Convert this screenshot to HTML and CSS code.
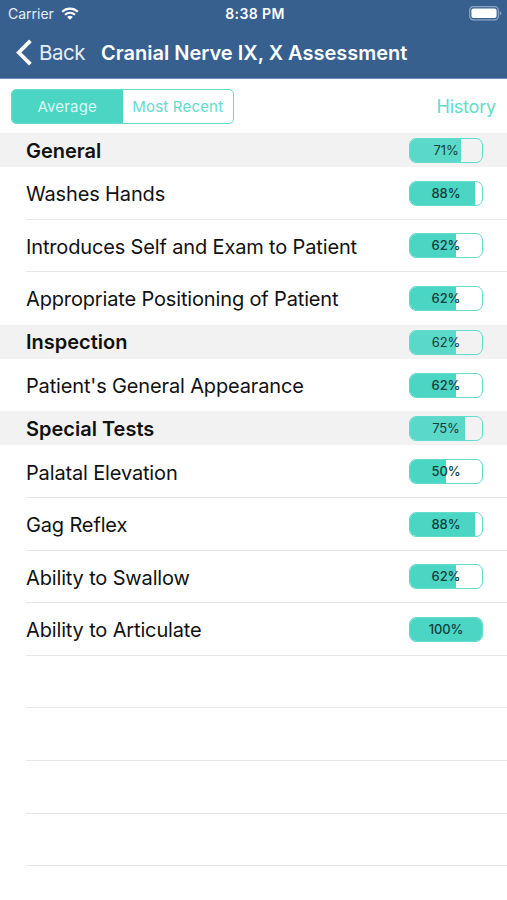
FILE: index.html
```html
<!DOCTYPE html>
<html lang="en">
<head>
    <meta charset="UTF-8">
    <meta name="viewport" content="width=device-width, initial-scale=1.0">
    <title>Cranial Nerve IX, X Assessment</title>
    <link rel="stylesheet" href="styles.css">
</head>
<body>
    <header>
        <div class="status">
            <div class="carrier">
                <span>Carrier</span>
                <svg class="wifi" width="18" height="13" viewBox="0 0 18 13">
                    <path d="M1.2 4.7C5.7 .6 12.3 .6 16.8 4.7M4 7.8C6.9 5.2 11.1 5.2 14 7.8" fill="none" stroke="#fff" stroke-width="2.1"/>
                    <path d="M6.1 9.9Q9 7.7 11.9 9.9L9 12.8Z" fill="#fff"/>
                </svg>
            </div>
            <span class="time">8:38 PM</span>
            <svg class="battery" width="33" height="15" viewBox="0 0 33 15">
                <rect x=".7" y=".7" width="28.6" height="13.1" rx="3.6" fill="none" stroke="#8ea6c6" stroke-width="1.2"/>
                <rect x="2.4" y="2.4" width="25.2" height="9.7" rx="2" fill="#fff"/>
                <path d="M30.8 5Q32.3 5.8 32.3 7.2T30.8 9.5Z" fill="#8ea6c6"/>
            </svg>
        </div>
        <nav>
            <a class="back">
                <svg width="17" height="27" viewBox="0 0 17 27">
                    <path d="M15.4 1.8L3.8 13.5L15.4 25.2" fill="none" stroke="#fff" stroke-width="3.8"/>
                </svg>
                <span>Back</span>
            </a>
            <h1>Cranial Nerve IX, X Assessment</h1>
        </nav>
    </header>

    <div class="toolbar">
        <div class="segments">
            <div class="segment active"><span>Average</span></div>
            <div class="segment"><span>Most Recent</span></div>
        </div>
        <a class="history">History</a>
    </div>

    <main>
        <div class="section"><h2>General</h2><div class="meter"><div class="fill" style="width: 71%"></div><span>71%</span></div></div>
        <div class="row"><p>Washes Hands</p><div class="meter"><div class="fill" style="width: 90%"></div><span>88%</span></div></div>
        <div class="row"><p>Introduces Self and Exam to Patient</p><div class="meter"><div class="fill" style="width: 64%"></div><span>62%</span></div></div>
        <div class="row last"><p>Appropriate Positioning of Patient</p><div class="meter"><div class="fill" style="width: 64%"></div><span>62%</span></div></div>
        <div class="section"><h2>Inspection</h2><div class="meter"><div class="fill" style="width: 64%"></div><span>62%</span></div></div>
        <div class="row last"><p>Patient's General Appearance</p><div class="meter"><div class="fill" style="width: 64%"></div><span>62%</span></div></div>
        <div class="section"><h2>Special Tests</h2><div class="meter"><div class="fill" style="width: 76%"></div><span>75%</span></div></div>
        <div class="row"><p>Palatal Elevation</p><div class="meter"><div class="fill" style="width: 50%"></div><span>50%</span></div></div>
        <div class="row"><p>Gag Reflex</p><div class="meter"><div class="fill" style="width: 90%"></div><span>88%</span></div></div>
        <div class="row"><p>Ability to Swallow</p><div class="meter"><div class="fill" style="width: 64%"></div><span>62%</span></div></div>
        <div class="row"><p>Ability to Articulate</p><div class="meter"><div class="fill" style="width: 100%"></div><span>100%</span></div></div>
        <div class="row"></div>
        <div class="row"></div>
        <div class="row"></div>
        <div class="row"></div>
    </main>
</body>
</html>
```
FILE: styles.css
```css
*{
    margin: 0;
    padding: 0;
    box-sizing: border-box;
}
body{
    width: 507px;
    height: 900px;
    overflow: hidden;
    background-color: #fff;
    font-family: Inter, "Liberation Sans", sans-serif;
    color: #111;
}
header{
    height: 79px;
    background-color: #38608f;
    border-bottom: 1px solid #6f8fbb;
    color: #fff;
}
.status{
    display: grid;
    grid-template-columns: 1fr auto 1fr;
    align-items: center;
    height: 27px;
    padding: 0 5px 0 8px;
    font-size: 14px;
}
.carrier{
    display: flex;
    align-items: center;
    gap: 7px;
    color: #e6edf6;
}
.time{
    font-weight: 600;
    letter-spacing: 0.4px;
}
.battery{
    justify-self: end;
}
nav{
    display: flex;
    align-items: center;
    height: 51px;
    padding-left: 15px;
}
.back{
    display: flex;
    align-items: center;
    gap: 7px;
    width: 86px;
    font-size: 20.5px;
    letter-spacing: -0.5px;
    color: #e6edf6;
}
h1{
    font-size: 20px;
    font-weight: 600;
    white-space: nowrap;
}
.toolbar{
    display: flex;
    align-items: center;
    justify-content: space-between;
    height: 54px;
    padding: 1px 11px 0;
}
.segments{
    display: flex;
    width: 223px;
    height: 35px;
    border: 1.4px solid #62dccb;
    border-radius: 5px;
    overflow: hidden;
}
.segment{
    display: flex;
    align-items: center;
    justify-content: center;
    flex: 1;
    font-size: 15px;
    letter-spacing: 0.2px;
    white-space: nowrap;
    color: #62dccb;
}
.active{
    background-color: #4bd5c3;
    color: #d8fbf5;
}
.history{
    font-size: 18px;
    letter-spacing: -0.2px;
    color: #62dccb;
}
.section, .row{
    display: flex;
    align-items: center;
    justify-content: space-between;
    padding-right: 24px;
}
.section{
    height: 34px;
    padding-top: 1px;
    padding-left: 26px;
    background-color: #f2f2f2;
}
h2{
    font-size: 20px;
    font-weight: 600;
}
.row{
    height: 52.6px;
    margin-left: 26px;
    padding-top: 1px;
    border-bottom: 1px solid #e6e6e6;
    font-size: 20px;
    letter-spacing: -0.15px;
    white-space: nowrap;
}
.row p{
    padding-top: 2px;
}
.last{
    border-bottom-color: transparent;
}
.meter{
    position: relative;
    width: 74px;
    height: 25px;
    border: 1.4px solid #62dccb;
    border-radius: 7px;
    overflow: hidden;
}
.fill{
    height: 100%;
    background-color: #4bd5c3;
}
.meter span{
    position: absolute;
    inset: 0;
    line-height: 22px;
    font-size: 13px;
    font-weight: 500;
    letter-spacing: -0.1px;
    text-align: center;
    color: #12403f;
}
.section .fill{
    background-color: #5bd9c8;
}
.section .meter span{
    font-weight: 400;
}
```
